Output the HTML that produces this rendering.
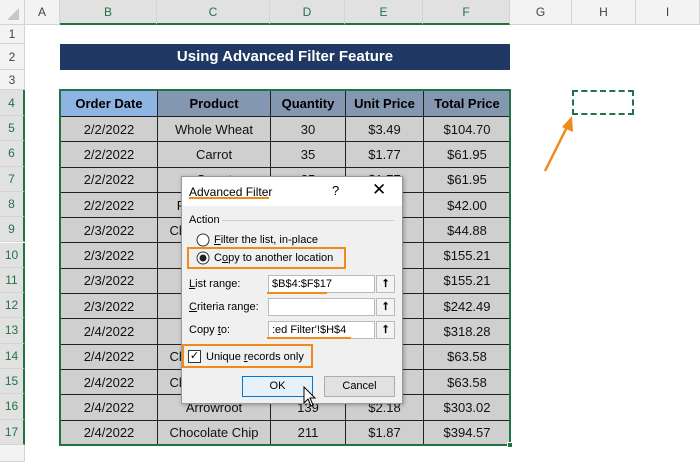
<!DOCTYPE html>
<html><head><meta charset="utf-8"><style>
*{margin:0;padding:0;box-sizing:border-box}
body{width:700px;height:462px;overflow:hidden;background:#fff;font-family:"Liberation Sans",sans-serif;position:relative}
.ab{position:absolute}
.ch{position:absolute;top:0;height:25px;background:#f3f3f3;border-right:1px solid #d4d4d4;border-bottom:1px solid #d4d4d4;font-size:12px;color:#444;text-align:center;line-height:25px}
.ch.s{background:#e1e1e1;border-bottom:2px solid #217346;color:#217346}
.rh{position:absolute;left:0;width:25px;background:#f3f3f3;border-bottom:1px solid #d4d4d4;border-right:1px solid #d4d4d4;font-size:12px;color:#444;text-align:center}
.rh.s{background:#e1e1e1;border-right:2px solid #217346;color:#217346}
table{position:absolute;left:60px;top:90px;border-collapse:collapse;table-layout:fixed}
td{border:1px solid #222;background:#cfcfcf;font-size:13px;text-align:center;height:25.3px;color:#111;white-space:nowrap;overflow:hidden}
th{border:1px solid #222;background:#8497b0;font-size:13px;height:26px;color:#000}
.dl{font-size:11px;color:#000}
.ob{position:absolute;border:2px solid #f08a1c}
.ul{position:absolute;height:2px;background:#f08a1c}
.tb{position:absolute;background:#fff;border:1px solid #bbb;height:18px;font-size:11px;line-height:16px;padding-left:3px}
.bt{position:absolute;width:19px;height:18px;border:1px solid #bbb;background:#f4f4f4;font-size:11px;text-align:center;line-height:16px;font-weight:bold}
</style></head><body>
<div class="ch" style="left:0;width:25px;background:#f3f3f3"><svg width="25" height="25"><polygon points="19,8 19,20 7,20" fill="#c8c8c8"/></svg></div>
<div class="ch" style="left:25px;width:35px">A</div>
<div class="ch s" style="left:60px;width:97px">B</div>
<div class="ch s" style="left:157px;width:113px">C</div>
<div class="ch s" style="left:270px;width:75px">D</div>
<div class="ch s" style="left:345px;width:78px">E</div>
<div class="ch s" style="left:423px;width:87px">F</div>
<div class="ch" style="left:510px;width:62px">G</div>
<div class="ch" style="left:572px;width:64px">H</div>
<div class="ch" style="left:636px;width:64px">I</div>
<div class="rh" style="top:25px;height:19px;line-height:19px">1</div>
<div class="rh" style="top:44px;height:26px;line-height:26px">2</div>
<div class="rh" style="top:70px;height:20px;line-height:20px">3</div>
<div class="rh s" style="top:90px;height:26px;line-height:26px">4</div>
<div class="rh s" style="top:116px;height:25.3px;line-height:25px">5</div>
<div class="rh s" style="top:141.3px;height:25.3px;line-height:25px">6</div>
<div class="rh s" style="top:166.6px;height:25.3px;line-height:25px">7</div>
<div class="rh s" style="top:191.9px;height:25.3px;line-height:25px">8</div>
<div class="rh s" style="top:217.2px;height:25.3px;line-height:25px">9</div>
<div class="rh s" style="top:242.5px;height:25.3px;line-height:25px">10</div>
<div class="rh s" style="top:267.8px;height:25.3px;line-height:25px">11</div>
<div class="rh s" style="top:293.1px;height:25.3px;line-height:25px">12</div>
<div class="rh s" style="top:318.4px;height:25.3px;line-height:25px">13</div>
<div class="rh s" style="top:343.7px;height:25.3px;line-height:25px">14</div>
<div class="rh s" style="top:369px;height:25.3px;line-height:25px">15</div>
<div class="rh s" style="top:394.3px;height:25.3px;line-height:25px">16</div>
<div class="rh s" style="top:419.6px;height:25.3px;line-height:25px">17</div>
<div class="rh" style="top:445px;height:17px"></div>

<div class="ab" style="left:60px;top:44px;width:450px;height:26px;background:#1f3864;color:#fff;font-weight:bold;font-size:15px;text-align:center;line-height:26px">Using Advanced Filter Feature</div>

<table>
<colgroup><col style="width:97px"><col style="width:113px"><col style="width:75px"><col style="width:78px"><col style="width:87px"></colgroup>
<tr><th style="background:#8db4e2">Order Date</th><th>Product</th><th>Quantity</th><th>Unit Price</th><th>Total Price</th></tr>
<tr><td>2/2/2022</td><td>Whole Wheat</td><td>30</td><td>$3.49</td><td>$104.70</td></tr>
<tr><td>2/2/2022</td><td>Carrot</td><td>35</td><td>$1.77</td><td>$61.95</td></tr>
<tr><td>2/2/2022</td><td>Carrot</td><td>35</td><td>$1.77</td><td>$61.95</td></tr>
<tr><td>2/2/2022</td><td>Potato Chips</td><td>20</td><td>$2.10</td><td>$42.00</td></tr>
<tr><td>2/3/2022</td><td>Chocolate Chip</td><td>24</td><td>$1.87</td><td>$44.88</td></tr>
<tr><td>2/3/2022</td><td>Bran</td><td>83</td><td>$1.87</td><td>$155.21</td></tr>
<tr><td>2/3/2022</td><td>Bran</td><td>83</td><td>$1.87</td><td>$155.21</td></tr>
<tr><td>2/3/2022</td><td>Oatmeal</td><td>129</td><td>$1.88</td><td>$242.49</td></tr>
<tr><td>2/4/2022</td><td>Bran</td><td>170</td><td>$1.87</td><td>$318.28</td></tr>
<tr><td>2/4/2022</td><td>Chocolate Chip</td><td>34</td><td>$1.87</td><td>$63.58</td></tr>
<tr><td>2/4/2022</td><td>Chocolate Chip</td><td>34</td><td>$1.87</td><td>$63.58</td></tr>
<tr><td>2/4/2022</td><td>Arrowroot</td><td>139</td><td>$2.18</td><td>$303.02</td></tr>
<tr><td>2/4/2022</td><td>Chocolate Chip</td><td>211</td><td>$1.87</td><td>$394.57</td></tr>
</table>
<div class="ab" style="left:59px;top:89px;width:452px;height:357px;border:2px solid #217346"></div>
<div class="ab" style="left:507px;top:442px;width:6px;height:6px;background:#217346;border:1px solid #fff"></div>

<div class="ab" style="left:572px;top:90px;width:62px;height:25px;border:2px dashed #217346"></div>
<svg class="ab" style="left:540px;top:112px" width="40" height="65"><line x1="5" y1="59" x2="28" y2="13" stroke="#f08a1c" stroke-width="2.5"/><polygon points="32,4 33,20 22,15" fill="#f08a1c"/></svg>

<div class="ab" style="left:181px;top:176px;width:222px;height:228px;background:#f0f0f0;border:1px solid #999;box-shadow:1px 1px 4px rgba(0,0,0,.3)">
<div class="ab" style="left:0;top:0;width:220px;height:29px;background:#fff"></div>
<div class="ab" style="left:7px;top:8px;font-size:12px">Advanced Filter</div>
<div class="ab" style="left:150px;top:6px;font-size:13px">?</div>
<div class="ab" style="left:190px;top:3px;font-size:17px">✕</div>
<div class="ab dl" style="left:7px;top:37px">Action</div>
<div class="ab" style="left:40px;top:43px;width:172px;height:1px;background:#ccc"></div>
<svg class="ab" style="left:14px;top:56px" width="14" height="14"><circle cx="7" cy="7" r="6" fill="#fff" stroke="#333"/></svg>
<div class="ab dl" style="left:32px;top:57px"><u>F</u>ilter the list, in-place</div>
<svg class="ab" style="left:14px;top:74px" width="14" height="14"><circle cx="7" cy="7" r="6" fill="#fff" stroke="#333"/><circle cx="7" cy="7" r="3.5" fill="#222"/></svg>
<div class="ab dl" style="left:32px;top:75px">C<u>o</u>py to another location</div>
<div class="ab dl" style="left:7px;top:101px"><u>L</u>ist range:</div>
<div class="ab dl" style="left:7px;top:124px"><u>C</u>riteria range:</div>
<div class="ab dl" style="left:7px;top:147px">Copy <u>t</u>o:</div>
<div class="tb" style="left:86px;top:98px;width:107px">$B$4:$F$17</div>
<div class="tb" style="left:86px;top:121px;width:107px"></div>
<div class="tb" style="left:86px;top:144px;width:107px">:ed Filter'!$H$4</div>
<div class="bt" style="left:194px;top:98px">⭡</div>
<div class="bt" style="left:194px;top:121px">⭡</div>
<div class="bt" style="left:194px;top:144px">⭡</div>
<div class="ab" style="left:6px;top:173px;width:13px;height:13px;background:#fff;border:1px solid #333;font-size:11px;line-height:11px;text-align:center">✓</div>
<div class="ab dl" style="left:24px;top:174px">Unique <u>r</u>ecords only</div>
<div class="ab" style="left:60px;top:199px;width:71px;height:21px;background:#e5f1fb;border:1px solid #0078d7;font-size:11px;text-align:center;line-height:19px">OK</div>
<div class="ab" style="left:142px;top:199px;width:71px;height:21px;background:#e1e1e1;border:1px solid #adadad;font-size:11px;text-align:center;line-height:19px">Cancel</div>
</div>
<div class="ob" style="left:187px;top:247px;width:159px;height:22px"></div>
<div class="ob" style="left:182px;top:344px;width:131px;height:24px"></div>
<div class="ul" style="left:189px;top:197px;width:80px"></div>
<div class="ul" style="left:267px;top:292px;width:60px"></div>
<div class="ul" style="left:267px;top:337px;width:84px"></div>
<svg class="ab" style="left:303px;top:386px" width="14" height="22"><path d="M1,1 L1,17 L5,13 L8,20 L10,19 L7,12 L12,12 Z" fill="#fff" stroke="#000"/></svg>
</body></html>
